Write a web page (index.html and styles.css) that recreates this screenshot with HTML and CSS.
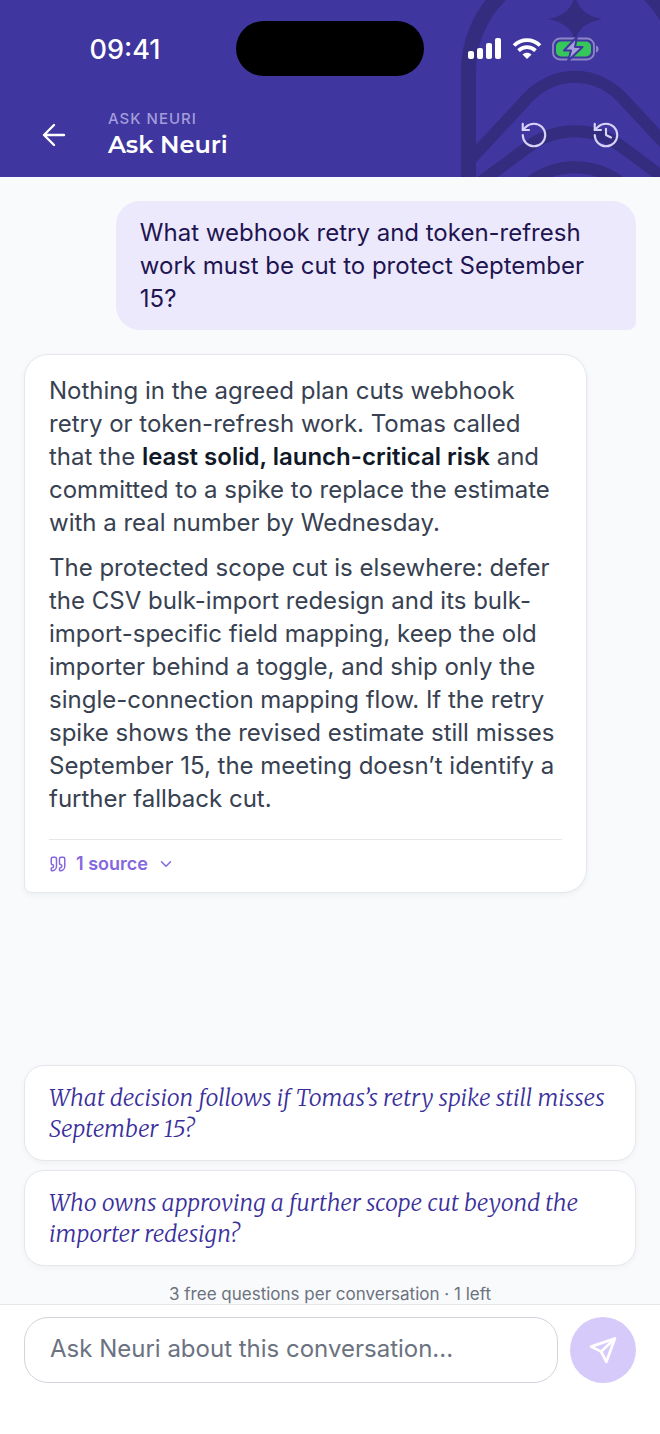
FILE: index.html
```html
<!DOCTYPE html>
<html lang="en">
<head>
    <meta charset="UTF-8">
    <meta name="viewport" content="width=device-width, initial-scale=1.0">
    <title>Ask Neuri</title>
    <link rel="stylesheet" href="styles.css">
</head>
<body>
    <header class="header">
        <svg class="header-pattern" width="230" height="177" viewBox="0 0 230 177" fill="none" stroke="#332c7f" aria-hidden="true">
            <clipPath id="arch"><rect x="31" y="0" width="199" height="177"/></clipPath>
            <path d="M38.500 190V71a106.500 106.500 0 0 1 213 0V190" stroke-width="15"/>
            <g clip-path="url(#arch)" stroke-width="12">
                <path d="M13 189L93 103C122 68 168 68 197 103L277 189"/>
                <path d="M40 190L98 147C126 126 164 126 192 147L250 190"/>
                <path d="M89 192C121 159 169 159 201 192"/>
            </g>
            <path d="M145 -5Q149 15 172 19Q149 23 145 41Q141 23 118 19Q141 15 145 -5Z" fill="#332c7f" stroke="none"/>
        </svg>

        <div class="status-bar">
            <span class="status-time">09:41</span>
            <span class="island"></span>
            <div class="status-icons">
                <svg width="34" height="22" viewBox="0 0 34 22" fill="#fff" aria-hidden="true">
                    <rect x="0" y="13" width="6" height="8" rx="2"/>
                    <rect x="9" y="10" width="6" height="11" rx="2"/>
                    <rect x="18" y="5" width="6" height="16" rx="2"/>
                    <rect x="27" y="0" width="6" height="21" rx="2"/>
                </svg>
                <svg width="30" height="22" viewBox="0 0 30 22" fill="none" stroke="#fff" stroke-width="3.800" aria-hidden="true">
                    <path d="M2 7.500C9.500 .3 20.500 .3 28 7.500"/>
                    <path d="M6.500 12.700C11.500 8 18.500 8 23.500 12.700"/>
                    <path d="M10.500 16.500C13 14.200 17 14.200 19.500 16.500L15 21Z" fill="#fff" stroke="none"/>
                </svg>
                <svg width="47" height="24" viewBox="0 0 47 24" aria-hidden="true">
                    <rect x="1" y="1.500" width="41" height="21" rx="7" fill="none" stroke="#8c86c4" stroke-width="1.800"/>
                    <path d="M44 8.500c3.500 1 3.500 6 0 7z" fill="#8c86c4"/>
                    <rect x="4" y="4.500" width="35" height="15" rx="5" fill="#35c759"/>
                    <path d="M25 0L12 13.500H19L16 24L30.500 10H23Z" fill="#a5a0d8" stroke="#3f369f" stroke-width="2" stroke-linejoin="round"/>
                </svg>
            </div>
        </div>

        <div class="nav">
            <button class="icon-button" aria-label="Back">
                <svg width="32" height="32" viewBox="0 0 24 24" fill="none" stroke="#fff" stroke-width="1.800" stroke-linecap="round" stroke-linejoin="round">
                    <path d="M19.500 12H4.500M12 4.500L4.500 12L12 19.500"/>
                </svg>
            </button>
            <div class="nav-titles">
                <span class="nav-label">ASK NEURI</span>
                <h1 class="nav-title">Ask Neuri</h1>
            </div>
            <button class="icon-button" aria-label="Restart conversation">
                <svg width="30" height="30" viewBox="0 0 24 24" fill="none" stroke="#d9d4f7" stroke-width="1.700" stroke-linecap="round" stroke-linejoin="round">
                    <path d="M3 12a9 9 0 1 0 9-9 9.750 9.750 0 0 0-6.740 2.740L3 8"/>
                    <path d="M3 3v5h5"/>
                </svg>
            </button>
            <button class="icon-button" aria-label="History">
                <svg width="30" height="30" viewBox="0 0 24 24" fill="none" stroke="#d9d4f7" stroke-width="1.700" stroke-linecap="round" stroke-linejoin="round">
                    <path d="M3 12a9 9 0 1 0 9-9 9.750 9.750 0 0 0-6.740 2.740L3 8"/>
                    <path d="M3 3v5h5"/>
                    <path d="M12 7v5l4 2"/>
                </svg>
            </button>
        </div>
    </header>

    <main class="chat">
        <div class="message question">
            <p>What webhook retry and token-refresh work must be cut to protect September 15?</p>
        </div>

        <div class="message answer">
            <p>Nothing in the agreed plan cuts webhook retry or token-refresh work. Tomas called that the <strong>least solid, launch-critical risk</strong> and committed to a spike to replace the estimate with a real number by Wednesday.</p>
            <p>The protected scope cut is elsewhere: defer the CSV bulk-import redesign and its bulk-import-specific field mapping, keep the old importer behind a toggle, and ship only the single-connection mapping flow. If the retry spike shows the revised estimate still misses September 15, the meeting doesn’t identify a further fallback cut.</p>
            <div class="sources">
                <button class="sources-button">
                    <svg width="18" height="18" viewBox="0 0 24 24" fill="none" stroke="currentColor" stroke-width="2" stroke-linecap="round" stroke-linejoin="round">
                        <path d="M16 3a2 2 0 0 0-2 2v6a2 2 0 0 0 2 2 1 1 0 0 1 1 1v1a2 2 0 0 1-2 2 1 1 0 0 0-1 1v2a1 1 0 0 0 1 1 6 6 0 0 0 6-6V5a2 2 0 0 0-2-2z"/>
                        <path d="M5 3a2 2 0 0 0-2 2v6a2 2 0 0 0 2 2 1 1 0 0 1 1 1v1a2 2 0 0 1-2 2 1 1 0 0 0-1 1v2a1 1 0 0 0 1 1 6 6 0 0 0 6-6V5a2 2 0 0 0-2-2z"/>
                    </svg>
                    <span>1 source</span>
                    <svg width="18" height="18" viewBox="0 0 24 24" fill="none" stroke="currentColor" stroke-width="2" stroke-linecap="round" stroke-linejoin="round">
                        <path d="M6 9l6 6 6-6"/>
                    </svg>
                </button>
            </div>
        </div>

        <div class="suggestions">
            <button class="suggestion">What decision follows if Tomas’s retry spike still misses September 15?</button>
            <button class="suggestion">Who owns approving a further scope cut beyond the importer redesign?</button>
        </div>
        <p class="quota">3 free questions per conversation · 1 left</p>
    </main>

    <form class="composer">
        <input class="composer-input" type="text" placeholder="Ask Neuri about this conversation..." aria-label="Ask Neuri about this conversation">
        <button class="send-button" type="button" aria-label="Send">
            <svg width="30" height="30" viewBox="0 0 24 24" fill="none" stroke="#fff" stroke-width="2.200" stroke-linecap="round" stroke-linejoin="round">
                <path d="M21.500 2.800L2.500 9.300L10.500 13.300L14.700 21.500Z"/>
                <path d="M21.500 2.800L10.500 13.300"/>
            </svg>
        </button>
    </form>
</body>
</html>
```
FILE: styles.css
```css
:root {
    --brand: #3f369f;
    --accent: #8467e0;
    --page-bg: #f9fafb;
    --border: #e5e7eb;
    --body-font: Inter, "Liberation Sans", sans-serif;
}

* {
    box-sizing: border-box;
}

body {
    margin: 0;
    min-height: 100vh;
    display: flex;
    flex-direction: column;
    background-color: var(--page-bg);
    color: #374151;
    font-family: var(--body-font);
    font-size: 24px;
    line-height: 33px;
}

p,
h1 {
    margin: 0;
}

button {
    padding: 0;
    border: none;
    background: none;
    color: inherit;
    font: inherit;
    cursor: pointer;
}

svg {
    display: block;
    flex-shrink: 0;
}

/* Header */
.header {
    position: relative;
    overflow: hidden;
    padding-bottom: 4px;
    background-color: var(--brand);
    color: #ffffff;
}

.header-pattern {
    position: absolute;
    top: 0;
    right: 0;
}

.status-bar {
    position: relative;
    display: grid;
    grid-template-columns: 1fr 188px 1fr;
    align-items: center;
    height: 97px;
}

.status-time {
    justify-self: center;
    padding: 2px 0 0 14px;
    font-size: 27px;
    font-weight: 500;
}

.island {
    height: 55px;
    border-radius: 28px;
    background-color: #000000;
}

.status-icons {
    display: flex;
    align-items: center;
    justify-content: center;
    gap: 10px;
    padding-right: 18px;
}

.nav {
    position: relative;
    display: flex;
    align-items: center;
    gap: 12px;
    height: 76px;
    padding: 0 24px;
}

.icon-button {
    display: flex;
    align-items: center;
    justify-content: center;
    width: 60px;
    height: 60px;
}

.nav-titles {
    flex: 1;
    display: flex;
    flex-direction: column;
    padding-left: 12px;
}

.nav-label {
    color: #a39ddb;
    font-size: 15px;
    font-weight: 500;
    line-height: 20px;
    letter-spacing: 1px;
}

.nav-title {
    font-family: Montserrat, Inter, sans-serif;
    font-size: 24px;
    font-weight: 600;
    line-height: 32px;
}

/* Conversation */
.chat {
    flex: 1;
    display: flex;
    flex-direction: column;
    padding: 24px 24px 0;
}

.question {
    align-self: flex-end;
    max-width: 85%;
    padding: 15px 24px;
    border-radius: 24px 24px 8px 24px;
    background-color: #ede9fc;
    color: #1e1551;
}

.answer {
    align-self: flex-start;
    max-width: 92%;
    margin-top: 24px;
    padding: 19px 24px 12px;
    border: 1px solid var(--border);
    border-radius: 24px 24px 24px 8px;
    background-color: #ffffff;
    box-shadow: 0 2px 6px rgba(0, 0, 0, 0.05);
}

.answer p + p {
    margin-top: 12px;
}

.answer strong {
    color: #111827;
    font-weight: 600;
}

.sources {
    margin-top: 24px;
    border-top: 1px solid var(--border);
    padding-top: 7px;
}

.sources-button {
    display: flex;
    align-items: center;
    gap: 9px;
    color: var(--accent);
    font-size: 18px;
    font-weight: 600;
    line-height: 33px;
}

.suggestions {
    display: flex;
    flex-direction: column;
    gap: 9px;
    margin-top: auto;
}

.suggestion {
    padding: 16px 24px;
    border: 1px solid var(--border);
    border-radius: 20px;
    background-color: #ffffff;
    box-shadow: 0 2px 6px rgba(0, 0, 0, 0.04);
    color: #3a2f9b;
    font-family: Merriweather, "Liberation Serif", serif;
    font-size: 23px;
    font-style: italic;
    font-weight: 300;
    line-height: 31px;
    text-align: left;
}

.quota {
    padding-top: 18px;
    color: #6b7280;
    font-size: 17px;
    line-height: 20px;
    text-align: center;
}

/* Composer */
.composer {
    display: flex;
    align-items: center;
    gap: 12px;
    padding: 12px 24px 51px;
    border-top: 1px solid var(--border);
    background-color: #ffffff;
}

.composer-input {
    flex: 1;
    min-width: 0;
    height: 66px;
    padding: 0 25px 4px;
    border: 1px solid #d1d5db;
    border-radius: 24px;
    background-color: #ffffff;
    color: #374151;
    font: inherit;
}

.composer-input::placeholder {
    color: #6b7280;
    opacity: 1;
}

.send-button {
    display: flex;
    align-items: center;
    justify-content: center;
    width: 66px;
    height: 66px;
    border-radius: 50%;
    background-color: #d6cafb;
}
```
